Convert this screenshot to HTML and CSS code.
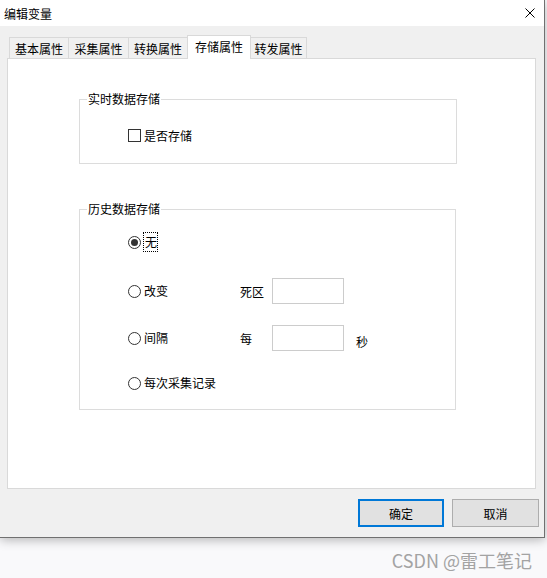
FILE: index.html
```html
<!DOCTYPE html>
<html lang="zh-CN">
<head>
  <meta charset="UTF-8" />
  <title>编辑变量</title>
  <link rel="stylesheet" href="styles.css">
</head>
<body>

<div class="dialog">
  <div class="title-bar">
    <span class="title">编辑变量</span>
    <span class="close-btn">
      <svg width="10" height="10" viewBox="0 0 10 10">
        <path d="M0.5 0.5 L9.5 9.5 M9.5 0.5 L0.5 9.5" stroke="#000" stroke-width="1" fill="none"/>
      </svg>
    </span>
  </div>

  <div class="dialog-body">
    <div class="tabs">
      <div class="tab tab-1">基本属性</div>
      <div class="tab tab-2">采集属性</div>
      <div class="tab tab-3">转换属性</div>
      <div class="tab tab-4 active">存储属性</div>
      <div class="tab tab-5">转发属性</div>
    </div>

    <div class="tab-panel">
      <fieldset class="group group-realtime">
        <legend>实时数据存储</legend>
        <label class="check-row"><span class="checkbox"></span>是否存储</label>
      </fieldset>

      <fieldset class="group group-history">
        <legend>历史数据存储</legend>
        <div class="option-list">
          <div class="option-row">
            <label class="radio-label"><span class="radio checked"></span><span class="focus-text">无</span></label>
          </div>
          <div class="option-row row-change">
            <label class="radio-label"><span class="radio"></span><span class="radio-text">改变</span></label>
            <span class="field-label">死区</span>
            <span class="text-box"></span>
          </div>
          <div class="option-row row-interval">
            <label class="radio-label"><span class="radio"></span><span class="radio-text">间隔</span></label>
            <span class="field-label">每</span>
            <span class="text-box"></span>
            <span class="unit">秒</span>
          </div>
          <div class="option-row row-each">
            <label class="radio-label"><span class="radio"></span><span class="radio-text">每次采集记录</span></label>
          </div>
        </div>
      </fieldset>
    </div>

    <div class="button-row">
      <button class="btn btn-default">确定</button>
      <button class="btn">取消</button>
    </div>
  </div>
</div>

<div class="watermark">CSDN @雷工笔记</div>

</body>
</html>
```

FILE: styles.css
```css
body {
  margin: 0;
  background: #f9f9fb;
  font-family: "Noto Sans CJK SC", sans-serif;
  font-size: 12px;
  color: #000;
}

.dialog {
  width: 544px;
  height: 537px;
  background: #f0f0f0;
  border-right: 1px solid #707070;
  border-bottom: 1px solid #707070;
  box-shadow: 0 2px 10px rgba(0, 0, 0, 0.28);
  display: flex;
  flex-direction: column;
}

.title-bar {
  height: 26px;
  background: #fff;
  display: flex;
  align-items: center;
  justify-content: space-between;
  padding: 0 9px 0 4px;
}

.title {
  line-height: 16px;
  margin-top: 2px;
}

.close-btn {
  display: flex;
  width: 10px;
  height: 10px;
}

.dialog-body {
  flex: 1;
  padding: 9px 0 0 7px;
  display: flex;
  flex-direction: column;
}

/* tab strip */
.tabs {
  display: flex;
  align-items: flex-end;
  height: 23px;
  padding-left: 2px;
}

.tab {
  box-sizing: border-box;
  height: 21px;
  border: 1px solid #d9d9d9;
  border-bottom: none;
  margin-left: -1px;
  padding-top: 2px;
  line-height: 18px;
  text-align: center;
  background: #f0f0f0;
}

.tab-1 { width: 60px; margin-left: 0; }
.tab-2 { width: 61px; }
.tab-3 { width: 60px; }
.tab-4 { width: 64px; }
.tab-5 { width: 57px; }

.tab.active {
  height: 24px;
  background: #fff;
  margin-bottom: -1px;
  padding-top: 2px;
  position: relative;
  z-index: 1;
}

.tab-panel {
  box-sizing: border-box;
  width: 529px;
  height: 431px;
  border: 1px solid #d9d9d9;
  background: #fff;
  padding: 32px 0 0 71px;
}

/* group boxes */
.group {
  box-sizing: border-box;
  width: 378px;
  margin: 0;
  padding: 0;
  min-width: 0;
  border: 1px solid #dcdcdc;
}

.group legend {
  margin-left: 7px;
  padding: 0 1px;
  line-height: 16px;
}

.group-history {
  width: 377px;
  margin-top: 37px;
}

.check-row {
  display: flex;
  align-items: center;
  height: 16px;
  padding: 20px 0 20px 48px;
}

.checkbox {
  box-sizing: border-box;
  width: 13px;
  height: 13px;
  border: 1px solid #333;
  background: #fff;
  margin-right: 3px;
}

.option-list {
  display: flex;
  flex-direction: column;
  padding: 12px 0 13px 48px;
}

.option-row {
  display: flex;
  align-items: center;
  height: 26px;
}

.row-change { margin-top: 23px; }
.row-interval { margin-top: 21px; }
.row-each { margin-top: 19px; }

.radio-label {
  display: flex;
  align-items: center;
  width: 112px;
}

.radio {
  box-sizing: border-box;
  width: 13px;
  height: 13px;
  border: 1px solid #333;
  border-radius: 50%;
  background: #fff;
}

.radio.checked::after {
  content: '';
  display: block;
  width: 7px;
  height: 7px;
  margin: 2px;
  border-radius: 50%;
  background: #333;
}

.radio-text {
  margin-left: 3px;
  line-height: 16px;
}

.focus-text {
  margin-left: 2px;
  border: 1px dotted #000;
  padding: 1px 0 1px 1px;
  line-height: 16px;
}

.field-label {
  width: 32px;
}

.text-box {
  box-sizing: border-box;
  width: 72px;
  height: 26px;
  border: 1px solid #cccccc;
  background: #fff;
}

.unit {
  margin-left: 12px;
  padding-top: 7px;
}

/* dialog buttons */
.button-row {
  display: flex;
  justify-content: flex-end;
  gap: 8px;
  margin-top: 10px;
  margin-right: 5px;
}

.btn {
  box-sizing: border-box;
  width: 87px;
  height: 28px;
  border: 1px solid #adadad;
  background: #e1e1e1;
  font-family: inherit;
  font-size: 12px;
  color: #000;
  padding: 0;
}

.btn-default {
  width: 86px;
  border: 2px solid #0078d7;
}

.watermark {
  width: 547px;
  box-sizing: border-box;
  text-align: right;
  padding: 10px 15px 0 0;
  font-size: 18px;
  line-height: 24px;
  color: #a3a3a3;
}
```
